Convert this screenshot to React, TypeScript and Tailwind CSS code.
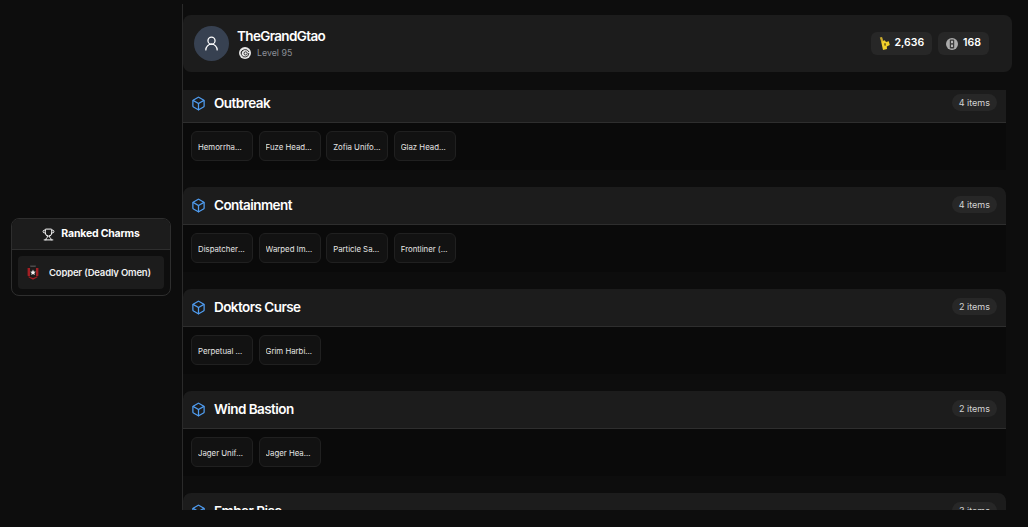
import { Box, Trophy, UserRound } from "lucide-react";

const sections = [
  { name: "Outbreak", count: "4 items", items: ["Hemorrhage Uniform", "Fuze Headgear Skin", "Zofia Uniform Skin", "Glaz Headgear Skin"], first: true },
  { name: "Containment", count: "4 items", items: ["Dispatcher Uniform", "Warped Imprint", "Particle Sabotage", "Frontliner (Elite)"] },
  { name: "Doktors Curse", count: "2 items", items: ["Perpetual Motion", "Grim Harbinger"] },
  { name: "Wind Bastion", count: "2 items", items: ["Jager Uniform", "Jager Headgear"] },
  { name: "Ember Rise", count: "3 items", items: ["Amaru Uniform", "Goyo Headgear"] },
];

function Renown() {
  return (
    <svg width="11" height="13" viewBox="0 0 11 13" className="shrink-0">
      <path d="M0.8 0.6 L3 0 L4.6 4.4 L2.4 5.2 Z" fill="#c9a92c" />
      <path d="M2.2 4.8 L5.8 3.2 L7 5 L9.8 4.2 L10.8 8 L7.8 9.6 L8 12 L4 12.9 Z" fill="#f0cf2b" />
      <path d="M5 6.4 L6.6 6 L7 8.4 L5.5 8.8 Z" fill="#6b5a16" />
    </svg>
  );
}

function Credits() {
  return (
    <svg width="12" height="12" viewBox="0 0 12 12" className="shrink-0">
      <circle cx="6" cy="6" r="6" fill="#ababab" />
      <rect x="3.8" y="1.4" width="4.4" height="9.2" rx="1" fill="#3a3a3a" />
      <rect x="5.1" y="2.8" width="1.8" height="2.4" fill="#c4c4c4" />
      <rect x="5.1" y="6.6" width="1.8" height="2.4" fill="#c4c4c4" />
    </svg>
  );
}

function Ubisoft() {
  return (
    <svg width="12" height="12" viewBox="0 0 12 12" className="shrink-0">
      <circle cx="6" cy="6" r="6" fill="#e8e8e8" />
      <path d="M2 6.4 A4.2 4.2 0 0 1 10 5" fill="none" stroke="#262626" strokeWidth="0.9" />
      <path d="M9.8 6 A3.8 3.8 0 1 1 4 3" fill="none" stroke="#262626" strokeWidth="0.9" />
      <circle cx="6.6" cy="6.4" r="1.6" fill="none" stroke="#262626" strokeWidth="0.9" />
    </svg>
  );
}

function Charm() {
  return (
    <svg width="14" height="16" viewBox="0 0 14 16" className="shrink-0">
      <path d="M4 0.5 H10 L9.4 2.4 H4.6 Z" fill="#4a4a4a" />
      <path d="M1 2 H13 V12.2 L7 15.6 L1 12.2 Z" fill="#1e1a1a" />
      <path d="M1.6 3 H4 V11.5 L1.6 10.8 Z M10 3 H12.4 V10.8 L10 11.5 Z" fill="#a31f24" />
      <path d="M2.5 11.4 L7 13 L11.5 11.4 L11.5 12.2 L7 14.8 L2.5 12.2 Z" fill="#a31f24" />
      <path d="M7 4.6 L7.8 6.6 L9.8 6.8 L8.3 8.1 L8.8 10 L7 9 L5.2 10 L5.7 8.1 L4.2 6.8 L6.2 6.6 Z" fill="#f4f4f4" />
    </svg>
  );
}

export default function App() {
  return (
    <div className="flex h-[527px] w-[1028px] overflow-hidden bg-[#0d0d0d] pt-[4px] text-white [font-family:Inter,'Liberation_Sans',sans-serif]">
      <aside className="flex h-[506px] w-[183px] shrink-0 items-center border-r border-[#2a2a2a] pl-[11px] pr-[11px]">
        <div className="w-[160px] overflow-hidden rounded-lg border border-[#2e2e2e] bg-[#0e0e0e]">
          <div className="flex h-[31px] items-center justify-center gap-[6px] border-b border-[#2e2e2e] bg-[#1c1c1c]">
            <Trophy size={13} strokeWidth={1.8} className="text-white" />
            <span className="text-[10.5px] font-bold leading-none tracking-[-0.2px]">Ranked Charms</span>
          </div>
          <div className="p-[6px]">
            <div className="flex h-[33px] items-center gap-[9px] rounded bg-[#1c1c1c] pl-[8px]">
              <Charm />
              <span className="truncate text-[9.5px] font-semibold leading-none tracking-[-0.18px] text-[#f0f0f0]">Copper (Deadly Omen)</span>
            </div>
          </div>
        </div>
      </aside>
      <main className="h-[506px] min-w-0 flex-1 overflow-hidden pt-[11px]">
        <div className="flex h-[57px] w-[829px] items-center rounded-lg bg-[#1c1c1c] pl-[11px] pr-[23px]">
          <div className="flex h-[35px] w-[35px] items-center justify-center rounded-full bg-[#374151]">
            <UserRound size={17} strokeWidth={1.8} className="text-white" />
          </div>
          <div className="ml-[8px] flex flex-col pb-[3px]">
            <span className="text-[13.5px] font-semibold leading-[20px] tracking-[-0.65px]">TheGrandGtao</span>
            <div className="mt-[1px] flex items-center gap-[6px] pl-[2px]">
              <Ubisoft />
              <span className="text-[8.8px] leading-[12px] text-[#8b8f96]">Level 95</span>
            </div>
          </div>
          <div className="ml-auto flex items-center gap-[6px]">
            <div className="flex h-[23px] items-center gap-[4px] rounded-md bg-[#272727] px-[8px]">
              <Renown />
              <span className="text-[10.5px] font-semibold leading-none">2,636</span>
            </div>
            <div className="flex h-[23px] items-center gap-[5px] rounded-md bg-[#272727] px-[8px]">
              <Credits />
              <span className="text-[10.5px] font-semibold leading-none">168</span>
            </div>
          </div>
        </div>
        <div className="mt-[18px] flex w-[823px] flex-col gap-[17px]">
          {sections.map((s) => (
            <section key={s.name} className={`flex flex-col overflow-hidden bg-[#0a0a0a] ${s.first ? "h-[80px]" : "h-[85px] rounded-t-lg"}`}>
              <div className={`flex shrink-0 items-center justify-between border-b border-[#2e2e2e] bg-[#1c1c1c] pl-[8px] pr-[9px] ${s.first ? "h-[33px] pb-[5px]" : "h-[38px]"}`}>
                <div className="flex items-center gap-[8px]">
                  <Box size={15} strokeWidth={2} className="text-[#4f9cf0]" />
                  <span className="text-[13.5px] font-semibold leading-none tracking-[-0.55px]">{s.name}</span>
                </div>
                <span className="mb-[2px] flex h-[17px] items-center rounded-full bg-[#272727] px-[7px] text-[9px] leading-none text-[#d4d4d4]">{s.count}</span>
              </div>
              <div className="flex gap-[5.6px] p-[8px]">
                {s.items.map((it) => (
                  <div key={it} className="flex h-[30px] w-[62px] items-center rounded-md border border-[#202020] bg-[#121212] px-[6px] pt-[1px]">
                    <span className="truncate text-[7.8px] leading-[10px] text-[#e5e5e5]">{it}</span>
                  </div>
                ))}
              </div>
            </section>
          ))}
        </div>
      </main>
    </div>
  );
}
